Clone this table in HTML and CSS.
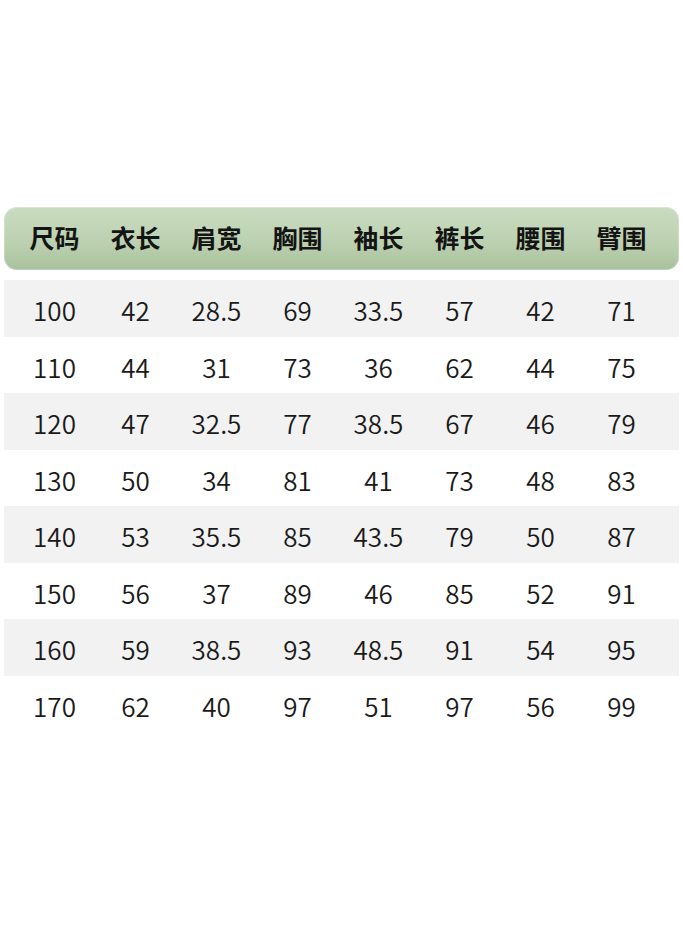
FILE: index.html
```html
<!DOCTYPE html>
<html lang="zh">
<head>
<meta charset="utf-8">
<link rel="stylesheet" href="styles.css">
</head>
<body>
<div class="page">
  <div class="table">
    <div class="head">
      <span>尺码</span><span>衣长</span><span>肩宽</span><span>胸围</span><span>袖长</span><span>裤长</span><span>腰围</span><span>臂围</span>
    </div>
    <div class="rows">
      <div class="row alt"><span>100</span><span>42</span><span>28.5</span><span>69</span><span>33.5</span><span>57</span><span>42</span><span>71</span></div>
      <div class="row"><span>110</span><span>44</span><span>31</span><span>73</span><span>36</span><span>62</span><span>44</span><span>75</span></div>
      <div class="row alt"><span>120</span><span>47</span><span>32.5</span><span>77</span><span>38.5</span><span>67</span><span>46</span><span>79</span></div>
      <div class="row"><span>130</span><span>50</span><span>34</span><span>81</span><span>41</span><span>73</span><span>48</span><span>83</span></div>
      <div class="row alt"><span>140</span><span>53</span><span>35.5</span><span>85</span><span>43.5</span><span>79</span><span>50</span><span>87</span></div>
      <div class="row"><span>150</span><span>56</span><span>37</span><span>89</span><span>46</span><span>85</span><span>52</span><span>91</span></div>
      <div class="row alt"><span>160</span><span>59</span><span>38.5</span><span>93</span><span>48.5</span><span>91</span><span>54</span><span>95</span></div>
      <div class="row"><span>170</span><span>62</span><span>40</span><span>97</span><span>51</span><span>97</span><span>56</span><span>99</span></div>
    </div>
  </div>
</div>
</body>
</html>
```

FILE: styles.css
```css
html, body {
  margin: 0;
  padding: 0;
  background: #ffffff;
}
.page {
  width: 683px;
  height: 931px;
  padding-top: 207px;
  box-sizing: border-box;
}
.table {
  margin: 0 4px;
  display: flex;
  flex-direction: column;
  gap: 10px;
}
.head {
  height: 63px;
  border-radius: 13px;
  background: linear-gradient(180deg, #cadcc1 0%, #bcd1b1 55%, #a9c19c 100%);
  box-shadow: inset 0 0 0 1px rgba(255,255,255,0.25);
  display: grid;
  grid-template-columns: repeat(8, 81px);
  padding-left: 10px;
  align-items: center;
  font-family: "Noto Sans CJK SC", sans-serif;
  font-weight: 600;
  font-size: 25px;
  color: #141414;
  padding-bottom: 3px;
  box-sizing: border-box;
}
.head span {
  text-align: center;
}
.rows {
  display: flex;
  flex-direction: column;
}
.row {
  height: 56.5px;
  display: grid;
  grid-template-columns: repeat(8, 81px);
  padding-left: 10px;
  align-items: center;
  font-family: "Noto Sans CJK SC", sans-serif;
  font-weight: 350;
  font-size: 26px;
  color: #1a1a1a;
  padding-top: 3px;
  box-sizing: border-box;
}
.row.alt {
  background: #f2f2f2;
}
.row span {
  text-align: center;
}
```
